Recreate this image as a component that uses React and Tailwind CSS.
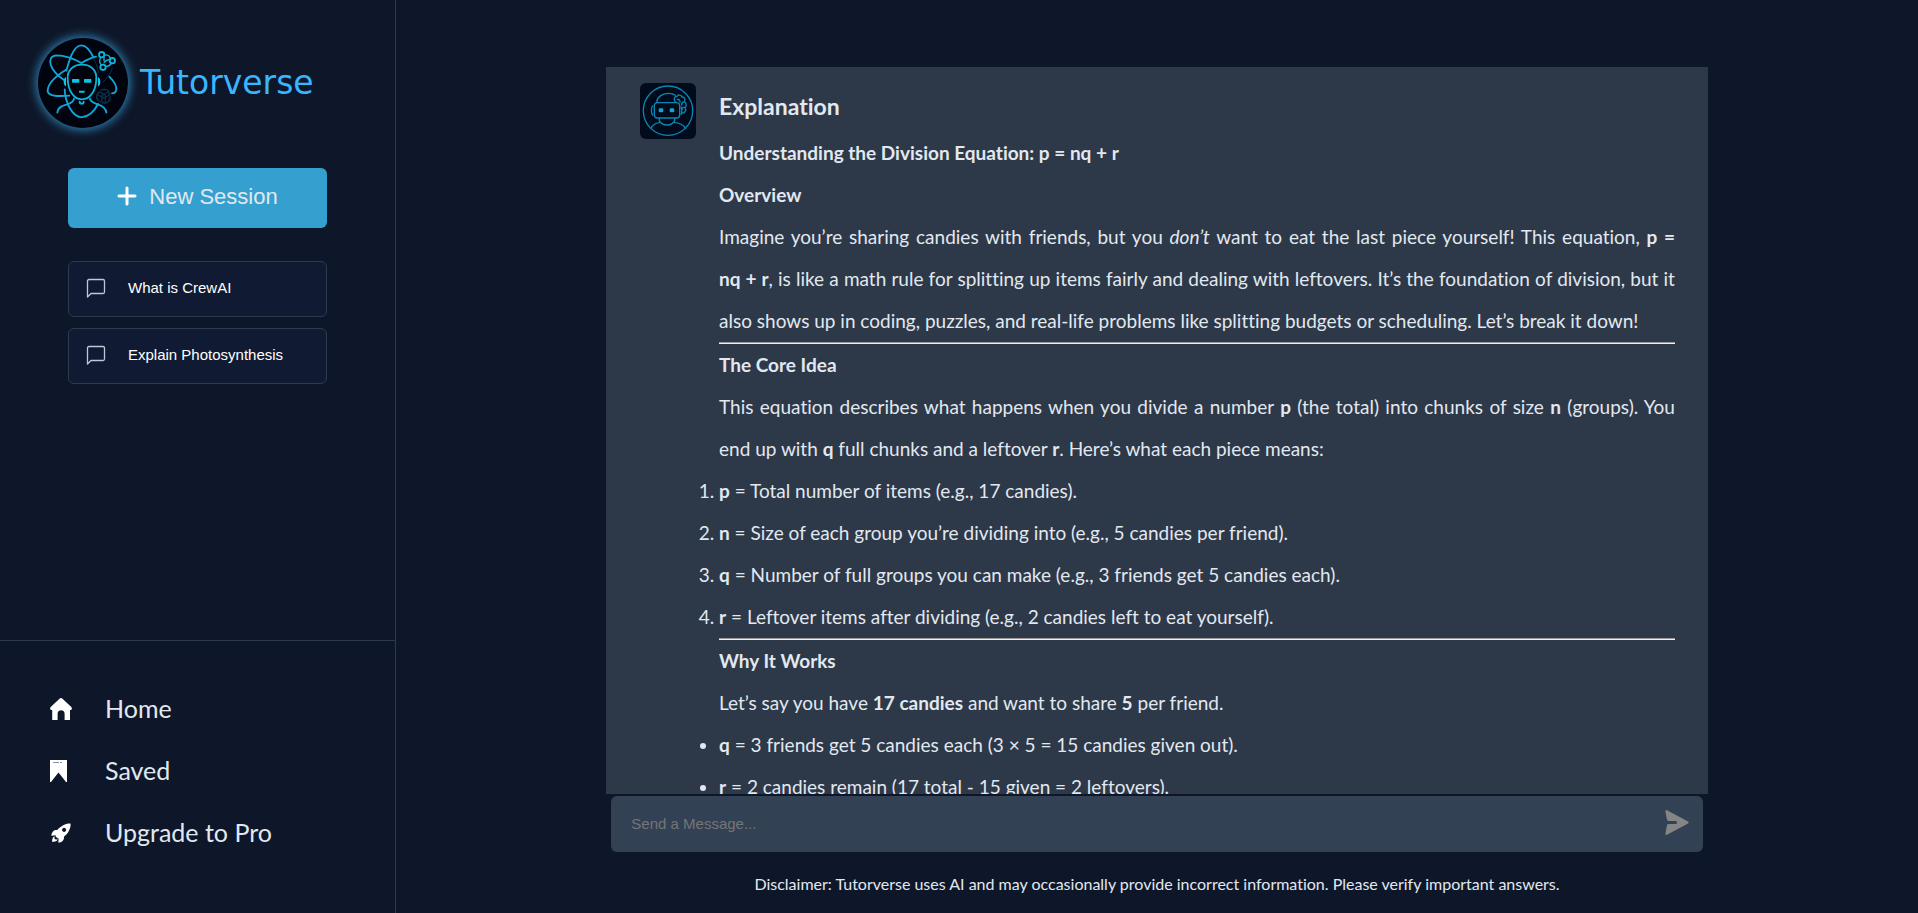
import { IoRocketSharp } from "react-icons/io5";

const sessions = ["What is CrewAI", "Explain Photosynthesis"];

const pieces = [
  { name: "p", text: "Total number of items (e.g., 17 candies)." },
  { name: "n", text: "Size of each group you’re dividing into (e.g., 5 candies per friend)." },
  { name: "q", text: "Number of full groups you can make (e.g., 3 friends get 5 candies each)." },
  { name: "r", text: "Leftover items after dividing (e.g., 2 candies left to eat yourself)." },
];

const results = [
  { name: "q", text: "3 friends get 5 candies each (3 × 5 = 15 candies given out)." },
  { name: "r", text: "2 candies remain (17 total - 15 given = 2 leftovers)." },
];

function LogoMark() {
  return (
    <svg viewBox="24 24 270 270" className="size-[90px] shrink-0 rounded-full bg-[#01040f] shadow-[0_0_10px_2px_rgba(56,160,220,0.75)]" fill="none" stroke="#10a6d8" strokeWidth="5.5" strokeLinecap="round" aria-hidden="true">
      <path d="M109 122 C114 104 118 90 124 76 C132 58 144 46 154 46 C168 46 181 62 191 84" />
      <path d="M198 80 C184 83 168 91 154 99 C134 86 102 76 80 76 C62 77 58 90 62 104 C67 120 82 136 102 150" />
      <path d="M108 119 C84 134 52 160 53 184 C56 200 88 199 118 197" />
      <path d="M238 140 C250 152 262 170 258 182 C256 188 252 190 246 190" />
      <path d="M104 178 C106 222 128 260 154 262 C178 260 194 242 204 222" />
      <path d="M82 248 C84 230 100 226 112 223 C124 219 131 214 132 206" />
      <path d="M229 248 C227 230 212 226 202 223 C190 219 181 214 180 206" />
      <path d="M190 84 C198 96 203 112 205 128 M247 114 C242 130 230 146 219 156" stroke="#0a3048" strokeWidth="3" />
      <g stroke="#0cb4d8">
        <path d="M156 104 C182 104 200 120 199 146 C198 180 182 208 156 208 C130 208 114 180 113 146 C112 120 130 104 156 104 Z" fill="#01040f" />
        <path d="M149 215 C149 223 161 223 161 215" />
        <circle cx="215" cy="74" r="8" />
        <circle cx="247" cy="92" r="8" />
        <circle cx="219" cy="112" r="8" />
        <path d="M223 76 C230 73 238 77 242 85 M212 83 C208 90 208 98 213 104 M222 82 L222 92 M222 98 C228 90 234 88 239 90 M228 110 C236 108 242 104 244 100" strokeWidth="4" />
      </g>
      <g fill="#0cc4e0" stroke="none">
        <rect x="126" y="147" width="22" height="11" rx="2" />
        <rect x="162" y="147" width="22" height="11" rx="2" />
        <rect x="147" y="182" width="17" height="6" rx="1" />
        <path d="M108 141 V169 Q101 166 101 155 Q101 144 108 141 Z M204 141 V169 Q211 166 211 155 Q211 144 204 141 Z" />
      </g>
      <g stroke="#0b3552" strokeWidth="3.5">
        <path d="M221 178 C232 176 240 186 237 196 L221 205 L206 196" />
        <path d="M221 178 C232 176 240 186 237 196 L221 205 L206 196" transform="rotate(120 221 199)" />
        <path d="M221 178 C232 176 240 186 237 196 L221 205 L206 196" transform="rotate(240 221 199)" />
        <circle cx="221" cy="199" r="20" strokeDasharray="14 7" />
      </g>
    </svg>
  );
}

function TutorAvatar() {
  return (
    <svg viewBox="0 0 168 168" className="size-14 shrink-0 rounded-md bg-[#010b1c]" fill="none" stroke="#0886b4" strokeWidth="4" strokeLinecap="round" role="img" aria-label="Tutor">
      <circle cx="84" cy="83" r="74" />
      <path d="M50 58 C52 40 68 31 86 31 C95 31 101 33 106 37" />
      <rect x="43" y="59" width="76" height="46" rx="9" />
      <path d="M38 69 C33 72 33 92 38 96 M123 94 C126 90 126 76 123 72" />
      <path d="M58 106 V113 C62 121 71 126 81 126 C91 126 100 121 104 113 V106" />
      <path d="M32 137 C38 124 50 119 62 118 M100 118 C116 119 130 124 137 137" />
      <path d="M108 58 C100 54 101 40 111 40 C114 34 124 35 126 42 C134 42 137 50 133 56 C140 60 140 70 135 74 C140 82 134 91 126 90 M112 50 C118 48 120 52 120 57 M133 56 C128 57 124 60 125 66 M135 74 C130 72 126 74 126 79" />
      <g fill="#10a5d4" stroke="none">
        <rect x="56" y="76" width="14" height="12" rx="4" />
        <rect x="89" y="76" width="14" height="12" rx="4" />
      </g>
    </svg>
  );
}

function PlusIcon() {
  return (
    <svg viewBox="0 0 20 20" className="size-5" stroke="#fff" strokeWidth="3" strokeLinecap="round" aria-hidden="true">
      <path d="M10 2 V18 M2 10 H18" />
    </svg>
  );
}

function MessageIcon() {
  return (
    <svg viewBox="0 0 20 20" className="size-5 shrink-0" fill="none" stroke="#c3c7d1" strokeWidth="1.3" strokeLinejoin="round" aria-hidden="true">
      <path d="M1.5 19 V3 Q1.5 1.5 3 1.5 H17 Q18.5 1.5 18.5 3 V14 Q18.5 15.5 17 15.5 H5 Z" />
    </svg>
  );
}

function HomeIcon() {
  return (
    <svg viewBox="0 0 22 22" className="size-[22px]" fill="#fff" aria-hidden="true">
      <path d="M11 0 C11.6 0 12 .3 12.5 .7 L21.3 9 C22.3 10 22 12 20.5 12 H20 V22 H14.6 V15.5 C14.6 11 7.6 11 7.6 15.5 V22 H2.2 V12 H1.5 C0 12 -.3 10 .7 9 L9.5 .7 C10 .3 10.4 0 11 0 Z" />
    </svg>
  );
}

function SavedIcon() {
  return (
    <svg viewBox="0 0 17 22" className="h-[22px] w-[17px]" fill="#fff" aria-hidden="true">
      <path d="M0 0 H17 V22 H16 L8.500 12.500 L1 22 H0 Z" />
      <path d="M3 2.500 H9 M10 2.500 H12" stroke="#8b8fa0" strokeWidth="1" />
    </svg>
  );
}

function SendIcon() {
  return (
    <svg viewBox="0 0 70 75" className="h-[25px] w-6" fill="#858585" aria-hidden="true">
      <path d="M0 3 Q0 -1 5 1 L67 34 Q73 37.500 67 41 L5 74 Q0 76 0 72 L5 46 Q6 42 10 42 H31 Q35 42 35 37.500 Q35 33 31 33 H10 Q6 33 5 29 Z" />
    </svg>
  );
}

const links = [
  { label: "Home", icon: <HomeIcon /> },
  { label: "Saved", icon: <SavedIcon /> },
  { label: "Upgrade to Pro", icon: <IoRocketSharp className="size-[22px] text-white" aria-hidden="true" /> },
];

function Sidebar() {
  return (
    <aside className="flex w-[396px] shrink-0 flex-col border-r border-[#2d3a4d]">
      <div className="flex flex-1 flex-col">
        <div className="flex items-center gap-3 pt-[38px] pl-[38px]">
          <LogoMark />
          <span className="font-['DejaVu_Sans',sans-serif] text-[33px] leading-10 text-[#38b6ff]">Tutorverse</span>
        </div>
        <div className="mt-10 flex flex-col px-[68px] font-['Liberation_Sans',Arial,sans-serif]">
          <button type="button" className="flex h-[60px] items-center justify-center gap-3 rounded-md bg-[#35a0cf] pb-1 text-[22px] text-[#e2e8f0]">
            <PlusIcon />
            New Session
          </button>
          <ul className="mt-[33px] flex flex-col gap-[11px]">
            {sessions.map((title) => (
              <li key={title}>
                <button type="button" className="flex h-14 w-full items-center gap-[22px] rounded-md border border-[#2d3a4d] bg-[#111a33] px-[17px] pb-0.5 text-left text-[15px] text-white">
                  <MessageIcon />
                  {title}
                </button>
              </li>
            ))}
          </ul>
        </div>
      </div>
      <nav className="border-t border-[#2d3a4d] pt-[37px] pb-[49px]">
        {links.map(({ label, icon }) => (
          <a key={label} href="#" className="flex h-[62px] items-center pl-[50px] text-[25px] text-[#e2e8f0]">
            <span className="flex w-[55px]">{icon}</span>
            {label}
          </a>
        ))}
      </nav>
    </aside>
  );
}

function Rule() {
  return <hr className="border-t border-b border-t-[#9a9a9a] border-b-[#eeeeee]" />;
}

function Explanation() {
  return (
    <article className="flex-1 pt-[14px] text-[19px] leading-[42px]">
      <h1 className="text-[23px] leading-[51px] font-bold">Explanation</h1>
      <h2 className="font-bold">Understanding the Division Equation: p = nq + r</h2>
      <h3 className="font-bold">Overview</h3>
      <p className="text-justify">
        Imagine you’re sharing candies with friends, but you <em>don’t</em> want to eat the last piece yourself! This
        equation, <strong>p = nq{"\u00a0"}+{"\u00a0"}r</strong>, is like a math rule for splitting up items fairly and
        dealing with leftovers. It’s the foundation of division, but it also shows up in coding, puzzles, and real-life
        problems like splitting budgets or scheduling. Let’s break it down!
      </p>
      <Rule />
      <h3 className="font-bold">The Core Idea</h3>
      <p className="text-justify">
        This equation describes what happens when you divide a number <strong>p</strong> (the total) into chunks of size{" "}
        <strong>n</strong> (groups). You end up with <strong>q</strong> full chunks and a leftover <strong>r</strong>.
        Here’s what each piece means:
      </p>
      <ol className="list-decimal">
        {pieces.map(({ name, text }) => (
          <li key={name}>
            <strong>{name}</strong> = {text}
          </li>
        ))}
      </ol>
      <Rule />
      <h3 className="font-bold">Why It Works</h3>
      <p>
        Let’s say you have <strong>17 candies</strong> and want to share <strong>5</strong> per friend.
      </p>
      <ul className="list-disc">
        {results.map(({ name, text }) => (
          <li key={name}>
            <strong>{name}</strong> = {text}
          </li>
        ))}
      </ul>
    </article>
  );
}

export default function App() {
  return (
    <div className="flex h-screen bg-[#0e1729] font-[Lato,sans-serif] text-[#e2e8f0] [font-variant-ligatures:none]">
      <Sidebar />
      <main className="flex min-w-0 flex-1 flex-col items-center pt-[67px]">
        <section className="flex min-h-0 w-[72.4%] flex-1 items-start gap-[23px] overflow-y-auto bg-[#2d3848] pr-[33px] pl-[34px] [scrollbar-width:none]">
          <div className="pt-4">
            <TutorAvatar />
          </div>
          <Explanation />
        </section>
        <form className="mt-0.5 flex h-14 w-[71.7%] shrink-0 items-center rounded-md bg-[#334155] pr-[14px] pl-5">
          <input type="text" aria-label="Send a Message" placeholder="Send a Message..." className="h-full min-w-0 flex-1 bg-transparent pb-0.5 font-['Liberation_Sans',Arial,sans-serif] text-[15px] outline-none placeholder:text-[#757575]" />
          <button type="button" aria-label="Send" className="pb-1">
            <SendIcon />
          </button>
        </form>
        <p className="shrink-0 pt-5 pb-[17px] text-base leading-6">
          Disclaimer: Tutorverse uses AI and may occasionally provide incorrect information. Please verify important
          answers.
        </p>
      </main>
    </div>
  );
}
